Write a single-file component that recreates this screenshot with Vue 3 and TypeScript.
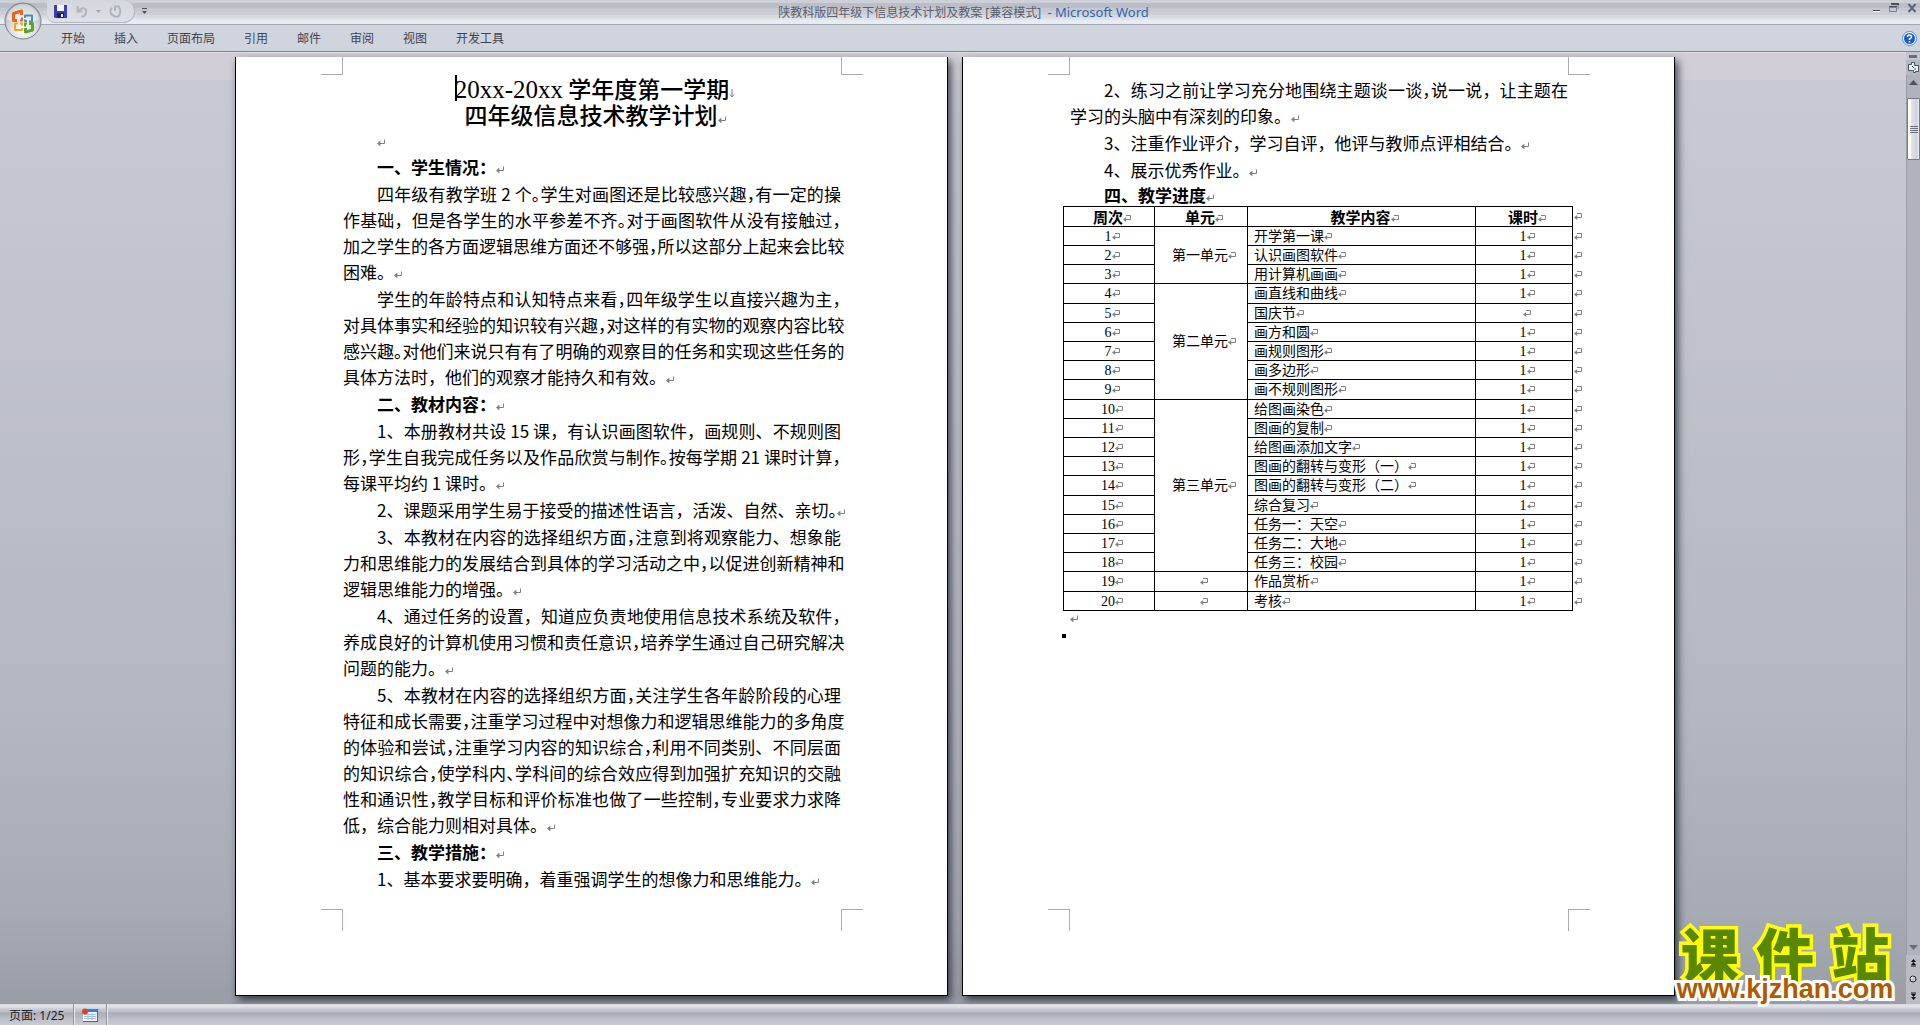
<script setup lang="ts">
import { h } from 'vue'

interface Block {
  kind: 'para' | 'head'
  lines: string[]
}

interface Row {
  week: number
  unit?: string
  span?: number
  topic: string
  hours: string
}

const menus = ['开始', '插入', '页面布局', '引用', '邮件', '审阅', '视图', '开发工具']

// A "~" before a punctuation mark sets that mark at half width.
const firstPage: Block[] = [
  { kind: 'head', lines: ['一、学生情况：'] },
  {
    kind: 'para',
    lines: [
      '四年级有教学班 2 个~。学生对画图还是比较感兴趣~，有一定的操',
      '作基础，但是各学生的水平参差不齐~。对于画图软件从没有接触过~，',
      '加之学生的各方面逻辑思维方面还不够强~，所以这部分上起来会比较',
      '困难。',
    ],
  },
  {
    kind: 'para',
    lines: [
      '学生的年龄特点和认知特点来看~，四年级学生以直接兴趣为主~，',
      '对具体事实和经验的知识较有兴趣~，对这样的有实物的观察内容比较',
      '感兴趣~。对他们来说只有有了明确的观察目的任务和实现这些任务的',
      '具体方法时，他们的观察才能持久和有效。',
    ],
  },
  { kind: 'head', lines: ['二、教材内容：'] },
  {
    kind: 'para',
    lines: [
      '1、本册教材共设 15 课，有认识画图软件，画规则、不规则图',
      '形~，学生自我完成任务以及作品欣赏与制作~。按每学期 21 课时计算~，',
      '每课平均约 1 课时。',
    ],
  },
  { kind: 'para', lines: ['2、课题采用学生易于接受的描述性语言，活泼、自然、亲切~。'] },
  {
    kind: 'para',
    lines: [
      '3、本教材在内容的选择组织方面~，注意到将观察能力、想象能',
      '力和思维能力的发展结合到具体的学习活动之中~，以促进创新精神和',
      '逻辑思维能力的增强。',
    ],
  },
  {
    kind: 'para',
    lines: [
      '4、通过任务的设置，知道应负责地使用信息技术系统及软件~，',
      '养成良好的计算机使用习惯和责任意识~，培养学生通过自己研究解决',
      '问题的能力。',
    ],
  },
  {
    kind: 'para',
    lines: [
      '5、本教材在内容的选择组织方面~，关注学生各年龄阶段的心理',
      '特征和成长需要~，注重学习过程中对想像力和逻辑思维能力的多角度',
      '的体验和尝试~，注重学习内容的知识综合~，利用不同类别、不同层面',
      '的知识综合~，使学科内~、学科间的综合效应得到加强扩充知识的交融',
      '性和通识性~，教学目标和评价标准也做了一些控制~，专业要求力求降',
      '低，综合能力则相对具体。',
    ],
  },
  { kind: 'head', lines: ['三、教学措施：'] },
  { kind: 'para', lines: ['1、基本要求要明确，着重强调学生的想像力和思维能力。'] },
]

const secondPage: Block[] = [
  {
    kind: 'para',
    lines: ['2、练习之前让学习充分地围绕主题谈一谈~，说一说，让主题在', '学习的头脑中有深刻的印象。'],
  },
  { kind: 'para', lines: ['3、注重作业评介，学习自评，他评与教师点评相结合。'] },
  { kind: 'para', lines: ['4、展示优秀作业。'] },
  { kind: 'head', lines: ['四、教学进度'] },
]

const pages = [firstPage, secondPage]

const rows: Row[] = [
  { week: 1, unit: '第一单元', span: 3, topic: '开学第一课', hours: '1' },
  { week: 2, topic: '认识画图软件', hours: '1' },
  { week: 3, topic: '用计算机画画', hours: '1' },
  { week: 4, unit: '第二单元', span: 6, topic: '画直线和曲线', hours: '1' },
  { week: 5, topic: '国庆节', hours: '' },
  { week: 6, topic: '画方和圆', hours: '1' },
  { week: 7, topic: '画规则图形', hours: '1' },
  { week: 8, topic: '画多边形', hours: '1' },
  { week: 9, topic: '画不规则图形', hours: '1' },
  { week: 10, unit: '第三单元', span: 9, topic: '给图画染色', hours: '1' },
  { week: 11, topic: '图画的复制', hours: '1' },
  { week: 12, topic: '给图画添加文字', hours: '1' },
  { week: 13, topic: '图画的翻转与变形（一）', hours: '1' },
  { week: 14, topic: '图画的翻转与变形（二）', hours: '1' },
  { week: 15, topic: '综合复习', hours: '1' },
  { week: 16, topic: '任务一：天空', hours: '1' },
  { week: 17, topic: '任务二：大地', hours: '1' },
  { week: 18, topic: '任务三：校园', hours: '1' },
  { week: 19, unit: '', span: 1, topic: '作品赏析', hours: '1' },
  { week: 20, unit: '', span: 1, topic: '考核', hours: '1' },
]

function pieces(line: string) {
  return line
    .split(/(~.)/)
    .filter((part) => part.length > 0)
    .map((part) => ({ half: part.startsWith('~'), text: part.replace('~', '') }))
}

const ParaMark = () =>
  h('svg', { width: 8, height: 8, viewBox: '0 0 8 8', 'aria-hidden': 'true' }, [
    h('path', { d: 'M7.5 0.5V4.5H1', fill: 'none', stroke: '#808080' }),
    h('path', { d: 'M0 4.5L3.4 1.6V7.4Z', fill: '#808080' }),
  ])

const CellMark = () =>
  h('svg', { width: 8, height: 8, viewBox: '0 0 8 8', 'aria-hidden': 'true' }, [
    h('path', { d: 'M3 0.5H7.5V4.5H1', fill: 'none', stroke: '#808080' }),
    h('path', { d: 'M0 4.5L3.2 2V7Z', fill: '#808080' }),
  ])
</script>

<template>
  <div class="app">
    <header class="ribbon">
      <button class="office" aria-label="Office">
        <svg width="38" height="38" viewBox="0 0 38 38">
          <defs>
            <radialGradient id="orb" cx="50%" cy="75%" r="70%">
              <stop offset="0" stop-color="#ffffff" />
              <stop offset="0.55" stop-color="#d9dade" />
              <stop offset="1" stop-color="#a9acb4" />
            </radialGradient>
          </defs>
          <circle cx="19" cy="19" r="18" fill="url(#orb)" stroke="#7d828c" />
          <path d="M3 18a16 16 0 0 1 32 0q-16 4-32 0z" fill="#fff" opacity=".45" />
          <g fill="none" stroke-linejoin="round">
            <path d="M13 18.500H9.500v-7l8-2.500v4" stroke="#e8641b" stroke-width="3" />
            <path d="M16 18.500h2v-3" stroke="#e8641b" stroke-width="2" />
            <path d="M21 16v-2.500h7v6h-3M21 17.500v1.500h2" stroke="#3a8fd8" stroke-width="2" />
            <path d="M14 21.500h-3v6.500h7v-2M16 21.500h2v2" stroke="#f0a818" stroke-width="2" />
            <path d="M25 21.500h3.500v6.500l-7 2v-4" stroke="#5aa62a" stroke-width="3" />
            <path d="M23 21.500h-2v3" stroke="#5aa62a" stroke-width="2" />
          </g>
        </svg>
      </button>
      <div class="titlebar">
        <div class="quick">
          <button aria-label="保存">
            <svg width="13" height="13" viewBox="0 0 13 13">
              <path d="M0 0h13v13H1L0 12z" fill="#3c3fae" />
              <path d="M3 0h7v6H3z" fill="#f2f5fc" />
              <path d="M3 8h7v5H3z" fill="#1d2058" />
              <path d="M7 9h2v3H7z" fill="#fff" />
            </svg>
          </button>
          <button class="undo" aria-label="撤消">
            <svg width="12" height="13" viewBox="0 0 12 13">
              <path d="M1.500 1v5.500h5M2.500 6Q5 2.500 8 3.500T10 8 5.500 12" fill="none" stroke="#b0b5c0" stroke-width="2" />
            </svg>
          </button>
          <button class="drop" aria-label="撤消列表">
            <svg width="5" height="3" viewBox="0 0 5 3"><path d="M0 0h5L2.500 3z" fill="#a4a9b4" /></svg>
          </button>
          <button class="redo" aria-label="重复">
            <svg width="13" height="13" viewBox="0 0 13 13">
              <path d="M3 3Q1 5 1.500 7.500T6 11.500 11 8 9.500 3M6 6V1.500h5" fill="none" stroke="#b0b5c0" stroke-width="2" />
            </svg>
          </button>
        </div>
        <button class="more" aria-label="自定义快速访问工具栏">
          <svg width="5" height="6" viewBox="0 0 5 6"><path d="M0 0h5v1H0zM0 3h5L2.500 6z" fill="#4c515b" /></svg>
        </button>
        <p class="caption">陕教科版四年级下信息技术计划及教案 [兼容模式] <span>- Microsoft Word</span></p>
        <div class="window">
          <button aria-label="最小化">
            <svg width="9" height="10" viewBox="0 0 9 10"><path d="M1 7h7v1H1z" fill="#3f444d" /><path d="M1 8h7v1H1z" fill="#fff" /></svg>
          </button>
          <button aria-label="还原">
            <svg width="10" height="10" viewBox="0 0 10 10">
              <path d="M3 1.500h6V6M.5 4.500h7v4h-7z" fill="none" stroke="#75809a" />
              <path d="M2 0h8v2H2zM0 3h8v1H0z" fill="#4a4f58" />
            </svg>
          </button>
          <button aria-label="关闭">
            <svg width="10" height="10" viewBox="0 0 10 10"><path d="M1.500 1l7 8M8.500 1l-7 8" stroke="#5b6577" stroke-width="2" /></svg>
          </button>
        </div>
      </div>
      <nav class="tabs">
        <button v-for="menu in menus" :key="menu">{{ menu }}</button>
        <button class="help" aria-label="帮助">
          <svg width="15" height="15" viewBox="0 0 15 15">
            <circle cx="7.5" cy="7.5" r="7" fill="#fff" stroke="#4d8fd0" />
            <circle cx="7.5" cy="7.5" r="5.500" fill="#1c5bcf" />
            <path d="M5.500 6Q5.500 4 7.500 4T9.500 6Q9.500 7 7.500 8V9" fill="none" stroke="#fff" stroke-width="1.500" />
            <path d="M6.700 10h1.600v1.500H6.700z" fill="#fff" />
          </svg>
        </button>
      </nav>
    </header>

    <div class="body">
      <main class="workspace">
        <article v-for="(page, p) in pages" :key="p" class="page">
          <div class="marks top"><i></i><i></i></div>
          <div class="content" :class="{ second: p === 1 }">
            <template v-if="p === 0">
              <h1>
                <span class="caret"></span><span class="latin">20xx-20xx</span> 学年度第一学期<svg class="break" width="6" height="9" viewBox="0 0 6 9" aria-hidden="true"><path d="M3 0v8M1 5.500l2 2.500 2-2.500" fill="none" stroke="#808080" /></svg><br />四年级信息技术教学计划<ParaMark />
              </h1>
              <p class="para"><span class="line empty"><ParaMark /></span></p>
            </template>
            <component :is="block.kind === 'head' ? 'h2' : 'p'" v-for="(block, b) in page" :key="b" class="para">
              <span v-for="(line, l) in block.lines" :key="l" class="line" :class="{ last: l === block.lines.length - 1 }"><span v-for="(piece, k) in pieces(line)" :key="k" :class="{ half: piece.half }">{{ piece.text }}</span><ParaMark v-if="l === block.lines.length - 1" /></span>
            </component>
            <template v-if="p === 1">
              <table>
                <colgroup>
                  <col class="c-week" /><col class="c-unit" /><col /><col class="c-hours" /><col class="c-end" />
                </colgroup>
                <thead>
                  <tr>
                    <th>周次<CellMark /></th>
                    <th>单元<CellMark /></th>
                    <th>教学内容<CellMark /></th>
                    <th>课时<CellMark /></th>
                    <td class="rowend"><CellMark /></td>
                  </tr>
                </thead>
                <tbody>
                  <tr v-for="row in rows" :key="row.week">
                    <td>{{ row.week }}<CellMark /></td>
                    <td v-if="row.span" :rowspan="row.span">{{ row.unit }}<CellMark /></td>
                    <td class="topic">{{ row.topic }}<CellMark /></td>
                    <td>{{ row.hours }}<CellMark /></td>
                    <td class="rowend"><CellMark /></td>
                  </tr>
                </tbody>
              </table>
              <p class="after"><ParaMark /></p>
              <div class="dot"></div>
            </template>
          </div>
          <div class="marks bottom"><i></i><i></i></div>
        </article>
      </main>

      <aside class="scroll">
        <div class="split"></div>
        <button class="ruler" aria-label="标尺">
          <svg width="13" height="13" viewBox="0 0 13 13">
            <path d="M1.500 3.500h3v-2h3v3h4v6h-3v1h-2v-2h-5z" fill="#eef1f6" stroke="#44546a" />
            <path d="M5 5l2 2M8 7v2" stroke="#44546a" />
          </svg>
        </button>
        <div class="track">
          <button class="arrow" aria-label="向上滚动">
            <svg width="9" height="5" viewBox="0 0 9 5"><path d="M0 5h9L4.500 0z" fill="#4d525c" /></svg>
          </button>
          <div class="thumb"><i></i><i></i><i></i><i></i></div>
          <button class="arrow down" aria-label="向下滚动">
            <svg width="9" height="5" viewBox="0 0 9 5"><path d="M0 0h9L4.500 5z" fill="#686d77" /></svg>
          </button>
        </div>
        <div class="browse">
          <button aria-label="前一页">
            <svg width="7" height="8" viewBox="0 0 7 8"><path d="M3.500 0L6 3H1zM3.500 3L6 6H1zM1 6.500h5v1H1z" fill="#111" /></svg>
          </button>
          <button aria-label="选择浏览对象">
            <svg width="8" height="8" viewBox="0 0 8 8"><circle cx="4" cy="4" r="3" fill="#c4c7cd" stroke="#24272c" /><path d="M2 4a2 2 0 0 1 2-2" stroke="#fff" fill="none" /></svg>
          </button>
          <button aria-label="下一页">
            <svg width="7" height="8" viewBox="0 0 7 8"><path d="M3.500 8L6 5H1zM3.500 5L6 2H1zM1 .5h5v1H1z" fill="#111" /></svg>
          </button>
        </div>
      </aside>
    </div>

    <footer class="status">
      <button class="pageno">页面: 1/25</button>
      <button class="macro" aria-label="录制宏">
        <svg width="16" height="14" viewBox="0 0 16 14">
          <path d="M1 1h15v13H1z" fill="#3d62a8" />
          <path d="M1 1h14v3H1z" fill="#3f7ae0" />
          <path d="M1 4h14v9H1z" fill="#f4f7fc" />
          <path d="M2 6.500h12M2 8.500h12M2 10.500h12M6 5v7M10 5v7" stroke="#a9bddd" />
          <circle cx="3" cy="3.500" r="3" fill="#d9481f" />
        </svg>
      </button>
    </footer>

    <div class="brand">
      <strong><span>课</span><span>件</span><span>站</span></strong>
      <a href="#">www.kjzhan.com</a>
    </div>
  </div>
</template>

<style>
body {
  margin: 0;
}
</style>

<style scoped>
.app {
  position: relative;
  display: flex;
  flex-direction: column;
  min-height: 100vh;
  overflow: hidden;
  font-family: "Noto Sans", "Noto Sans CJK SC", sans-serif;
  font-size: 12px;
  color: #000;
}
button {
  display: flex;
  align-items: center;
  justify-content: center;
  padding: 0;
  border: 0;
  background: none;
  font: inherit;
  color: inherit;
}
p,
h1,
h2 {
  margin: 0;
}

.ribbon {
  position: relative;
}
.office {
  position: absolute;
  left: 4px;
  top: 2px;
}
.titlebar {
  display: flex;
  align-items: flex-start;
  height: 24px;
  border-bottom: 1px solid #a0a6b0;
  background: linear-gradient(#cdd0d7 0 3px, #bbbec7 3px 8px, #c5c8d0 8px 11px, #cbced6 11px 15px, #d6d9e0 15px 18px, #e0e3e8 18px 20px, #e6ebf4 20px);
}
.quick {
  display: flex;
  align-items: center;
  box-sizing: border-box;
  width: 88px;
  height: 23px;
  margin-left: 47px;
  padding-left: 7px;
  border: 1px solid #b4b8c1;
  border-top: 0;
  border-left: 0;
  border-radius: 0 12px 12px 8px;
  background: linear-gradient(#d3d6dd, #dde0e7);
}
.undo {
  margin-left: 9px;
}
.drop {
  margin: 0 8px;
}
.more {
  height: 22px;
  margin-left: 7px;
}
.caption {
  flex: 1;
  padding-right: 92px;
  line-height: 25px;
  text-align: center;
  white-space: pre;
  color: #5c606a;
}
.caption span {
  margin-left: 3px;
  font-size: 13px;
  color: #2f68a8;
}
.window {
  display: flex;
  gap: 8px;
  padding: 3px 3px 0 0;
}
.tabs {
  display: flex;
  align-items: center;
  gap: 29px;
  height: 26px;
  padding: 0 3px 0 61px;
  border-bottom: 1px solid #7e838c;
  background: #d0d4dc;
  color: #3f454f;
}
.help {
  margin-left: auto;
}

.body {
  flex: 1;
  display: flex;
  background: linear-gradient(#e0e1e5 0 1px, #d1ced8 1px 28px, #c8cad3 28px, #c0c3cb 30%, #b3b7c0 70%, #a7abb3 90%, #999da5);
}
.workspace {
  flex: 1;
  display: flex;
  justify-content: center;
  gap: 14px;
  padding: 5px 0 8px 4px;
  overflow: hidden;
}
.page {
  display: flex;
  flex-direction: column;
  box-sizing: border-box;
  width: 713px;
  padding: 0 84px 64px 85px;
  border: 1px solid #000;
  border-top: 0;
  background: #fff;
  box-shadow: 3px 4px 8px rgba(20, 24, 32, 0.75);
}
.marks {
  display: flex;
  justify-content: space-between;
}
.marks i {
  box-sizing: border-box;
  width: 22px;
  border: 0 solid #a9acb4;
}
.top i {
  height: 18px;
  border-bottom-width: 1px;
}
.bottom {
  margin-top: auto;
}
.bottom i {
  height: 22px;
  border-top-width: 1px;
}
.marks i:first-child {
  border-right-width: 1px;
}
.marks i:last-child {
  border-left-width: 1px;
}
.content {
  padding: 0 22px 12px;
}
.content.second {
  padding-top: 2px;
}
h1 {
  padding-left: 6px;
  font: 500 23px/26px "Noto Sans CJK SC", sans-serif;
  text-align: center;
  white-space: nowrap;
}
.latin {
  font-family: "Liberation Serif", serif;
  font-size: 25px;
  font-weight: 400;
  line-height: 1px;
}
.caret {
  position: absolute;
  width: 2px;
  height: 26px;
  background: #000;
}
.para {
  margin-bottom: 1px;
  font: 17px/26px "Noto Sans CJK SC", sans-serif;
}
h2.para {
  font-weight: 700;
}
.second h2.para {
  margin-bottom: 0;
  line-height: 22px;
}
.line {
  display: block;
  text-align: justify;
  text-align-last: justify;
  white-space: nowrap;
}
.line:first-child {
  padding-left: 34px;
}
.line.last,
.line.empty {
  text-align-last: left;
}
.half {
  font-feature-settings: "halt";
}

table {
  width: calc(100% + 28px);
  margin: 0 -21px 0 -7px;
  table-layout: fixed;
  border-collapse: collapse;
  font: 14px/16px "Liberation Serif", "Noto Sans CJK SC", serif;
}
.c-week {
  width: 91px;
}
.c-unit {
  width: 93px;
}
.c-hours {
  width: 97px;
}
.c-end {
  width: 16px;
}
tr {
  height: 19px;
}
thead tr,
tbody tr:nth-child(5n + 4) {
  height: 20px;
}
th,
td {
  padding: 1px 0 0 6px;
  border: 1px solid #000;
  text-align: center;
  vertical-align: middle;
  white-space: nowrap;
}
th {
  padding-top: 0;
  font: 700 15px/16px "Noto Sans CJK SC", sans-serif;
}
.topic {
  text-align: left;
}
.rowend {
  border: 0;
  padding-left: 1px;
  text-align: left;
}
.after {
  line-height: 16px;
}
.dot {
  width: 4px;
  height: 4px;
  margin: 7px 0 0 -8px;
  background: #000;
}

.scroll {
  display: flex;
  flex-direction: column;
  width: 14px;
  background: #c3c6ce;
}
.split {
  height: 3px;
  margin: 3px 3px 2px;
  background: #696d76;
}
.ruler {
  height: 15px;
  background: #b4b8c0;
}
.track {
  flex: 1;
  display: flex;
  flex-direction: column;
  border-left: 1px solid #999da6;
  background: #b0b3bc;
}
.arrow {
  height: 15px;
}
.arrow.down {
  margin-top: auto;
}
.thumb {
  display: flex;
  flex-direction: column;
  align-items: center;
  justify-content: center;
  gap: 1px;
  box-sizing: border-box;
  height: 62px;
  margin-top: 8px;
  border: 1px solid #777b84;
  border-radius: 1px;
  background: linear-gradient(90deg, #fffdf4 0 3px, #e3e5ed 3px, #ced2dc 9px, #f4f5f8);
}
.thumb i {
  width: 8px;
  height: 1px;
  background: #6e727b;
}
.browse {
  display: flex;
  flex-direction: column;
  justify-content: space-around;
  height: 49px;
  background: #b9bcc5;
}

.status {
  display: flex;
  height: 21px;
  background: linear-gradient(#d5d7dc, #e4e6ea 2px, #c9ccd4 5px, #b9bcc5 8px, #a9acb5 9px, #bfc2cb 16px, #c9ccd5);
  color: #1c1f25;
}
.status button {
  border-right: 1px solid #8f939c;
  box-shadow: 1px 0 #e6e8ec;
}
.pageno {
  padding: 0 9px;
}
.macro {
  width: 33px;
}

.brand {
  position: absolute;
  right: 22px;
  bottom: 24px;
  width: 226px;
}
.brand strong,
.brand a {
  display: block;
  paint-order: stroke fill;
}
.brand strong {
  display: flex;
  justify-content: space-around;
  font: 900 58px/50px "Noto Sans CJK SC", sans-serif;
  color: #598700;
  -webkit-text-stroke: 7px #ff0;
}
.brand a {
  position: relative;
  font: 700 27px/24px "Liberation Sans", sans-serif;
  text-align: center;
  text-decoration: none;
  color: #b05a00;
  -webkit-text-stroke: 6px #fff;
}
</style>
